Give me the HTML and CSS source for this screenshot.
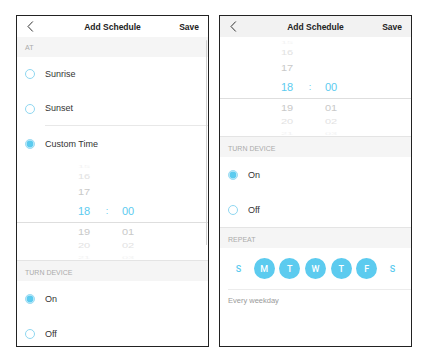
FILE: index.html
```html
<!DOCTYPE html>
<html>
<head>
<meta charset="utf-8">
<link rel="stylesheet" href="styles.css">
</head>
<body>
<div class="screens">
  <div class="phone">
    <div class="topbar">
      <span class="back"><svg width="7" height="11" viewBox="0 0 7 11"><path d="M5.8 0.5 L1 5.5 L5.8 10.5" fill="none" stroke="#333" stroke-width="1"/></svg></span>
      <span class="title">Add Schedule</span>
      <span class="save">Save</span>
    </div>
    <div class="section first">AT</div>
    <div class="opt short"><span class="radio"></span><span class="label">Sunrise</span></div>
    <div class="opt"><span class="radio"></span><span class="label sep">Sunset</span></div>
    <div class="opt"><span class="radio on"></span><span class="label">Custom Time</span></div>
    <div class="picker">
      <div class="prow r15"><span>15</span><span></span><span></span></div>
      <div class="prow r16"><span>16</span><span></span><span></span></div>
      <div class="prow r17"><span>17</span><span></span><span></span></div>
      <div class="prow r18"><span>18</span><span>:</span><span>00</span></div>
      <div class="prow r19"><span>19</span><span></span><span>01</span></div>
      <div class="prow r20"><span>20</span><span></span><span>02</span></div>
      <div class="prow r21"><span>21</span><span></span><span>03</span></div>
    </div>
    <div class="section">Turn Device</div>
    <div class="opt"><span class="radio on"></span><span class="label">On</span></div>
    <div class="opt"><span class="radio"></span><span class="label">Off</span></div>
    <div class="scrollbar"></div>
  </div>

  <div class="phone">
    <div class="topbar gray">
      <span class="back"><svg width="7" height="11" viewBox="0 0 7 11"><path d="M5.8 0.5 L1 5.5 L5.8 10.5" fill="none" stroke="#333" stroke-width="1"/></svg></span>
      <span class="title">Add Schedule</span>
      <span class="save">Save</span>
    </div>
    <div class="picker">
      <div class="prow r15"><span>15</span><span></span><span></span></div>
      <div class="prow r16"><span>16</span><span></span><span></span></div>
      <div class="prow r17"><span>17</span><span></span><span></span></div>
      <div class="prow r18"><span>18</span><span>:</span><span>00</span></div>
      <div class="prow r19"><span>19</span><span></span><span>01</span></div>
      <div class="prow r20"><span>20</span><span></span><span>02</span></div>
      <div class="prow r21"><span>21</span><span></span><span>03</span></div>
    </div>
    <div class="section">Turn Device</div>
    <div class="opt"><span class="radio on"></span><span class="label">On</span></div>
    <div class="opt"><span class="radio"></span><span class="label">Off</span></div>
    <div class="section">Repeat</div>
    <div class="days">
      <span class="day">S</span>
      <span class="day sel">M</span>
      <span class="day sel">T</span>
      <span class="day sel">W</span>
      <span class="day sel">T</span>
      <span class="day sel">F</span>
      <span class="day">S</span>
    </div>
    <div class="note">Every weekday</div>
  </div>
</div>
</body>
</html>
```
FILE: styles.css
```css
body {
  margin: 0;
  background: #fff;
  font-family: "Liberation Sans", Arial, sans-serif;
  color: #333;
}
.screens {
  display: flex;
  gap: 10px;
  padding: 15px 0 0 16px;
}
.phone {
  width: 193px;
  height: 332px;
  border: 1px solid #222;
  box-sizing: border-box;
  overflow: hidden;
  position: relative;
  background: #fff;
}
.topbar {
  height: 21px;
  display: grid;
  grid-template-columns: 1fr auto 1fr;
  align-items: center;
  padding: 0 9px 0 10px;
}
.topbar.gray { background: #f2f2f2; }
.back { display: flex; align-items: center; }
.back svg { display: block; }
.title {
  font-size: 8.5px;
  font-weight: bold;
  color: #222;
  padding-right: 1px;
}
.save {
  justify-self: end;
  font-size: 8.5px;
  font-weight: bold;
  color: #222;
}
.section {
  height: 21px;
  box-sizing: border-box;
  background: #f5f5f5;
  border-top: 1px solid #e4e4e4;
  padding: 8px 0 0 8px;
  font-size: 7px;
  line-height: 8px;
  color: #ababab;
  text-transform: uppercase;
}
.section.first {
  height: 20px;
  border-top: none;
  padding-top: 7px;
}
.opt {
  height: 35px;
  display: flex;
  align-items: center;
  padding-left: 8px;
}
.opt.short { height: 34px; }
.radio {
  width: 10px;
  height: 10px;
  box-sizing: border-box;
  border: 1px solid #8fd7f1;
  border-radius: 50%;
  flex: none;
  margin-right: 10px;
}
.radio.on {
  background: #5ccbef;
  border-color: #a3def4;
  box-shadow: inset 0 0 0 0.6px #e6f7fd;
}
.label {
  flex: 1;
  height: 100%;
  display: flex;
  align-items: center;
  font-size: 9px;
  color: #333;
  box-sizing: border-box;
}
.label.sep { border-bottom: 1px solid #e8e8e8; }
.picker {
  height: 99px;
  display: flex;
  flex-direction: column;
  overflow: hidden;
}
.prow {
  display: grid;
  grid-template-columns: 24px 22px 20px;
  padding-left: 55px;
  align-items: center;
  box-sizing: border-box;
  font-size: 11px;
  line-height: 11px;
}
.prow span { text-align: center; display: block; }
.r15 { height: 10px; color: #f3f3f3; }
.r15 span { transform: scaleY(0.3); }
.r16 { height: 10px; color: #e2e2e2; }
.r16 span { transform: scaleY(0.6); }
.r17 { height: 20px; color: #c9c9c9; }
.r17 span { transform: scaleY(0.9); }
.r18 {
  height: 22px;
  color: #5ccbef;
  border-bottom: 1px solid #dedede;
}
.r18 span:nth-child(2) { font-size: 9px; }
.r19 { height: 16px; color: #c9c9c9; }
.r19 span { transform: scaleY(0.9); }
.r20 { height: 13px; color: #e2e2e2; }
.r20 span { transform: scaleY(0.6); }
.r21 { height: 8px; color: #f3f3f3; }
.r21 span { transform: scaleY(0.3); }
.days {
  height: 42px;
  box-sizing: border-box;
  margin-left: 8px;
  padding-right: 8px;
  display: flex;
  justify-content: space-between;
  align-items: center;
  border-bottom: 1px solid #ececec;
}
.day {
  width: 21px;
  height: 21px;
  border-radius: 50%;
  display: flex;
  align-items: center;
  justify-content: center;
  font-family: Roboto, "Liberation Sans", sans-serif;
  font-weight: 500;
  font-size: 9px;
  color: #5ccbef;
}
.day.sel {
  background: #5ccbef;
  color: #fff;
}
.note {
  padding: 6px 8px;
  font-size: 7.5px;
  line-height: 9px;
  color: #9a9a9a;
}
.scrollbar {
  position: absolute;
  top: 24px;
  right: 1px;
  width: 1.5px;
  height: 205px;
  background: #d0d0d0;
  border-radius: 1px;
}
```
